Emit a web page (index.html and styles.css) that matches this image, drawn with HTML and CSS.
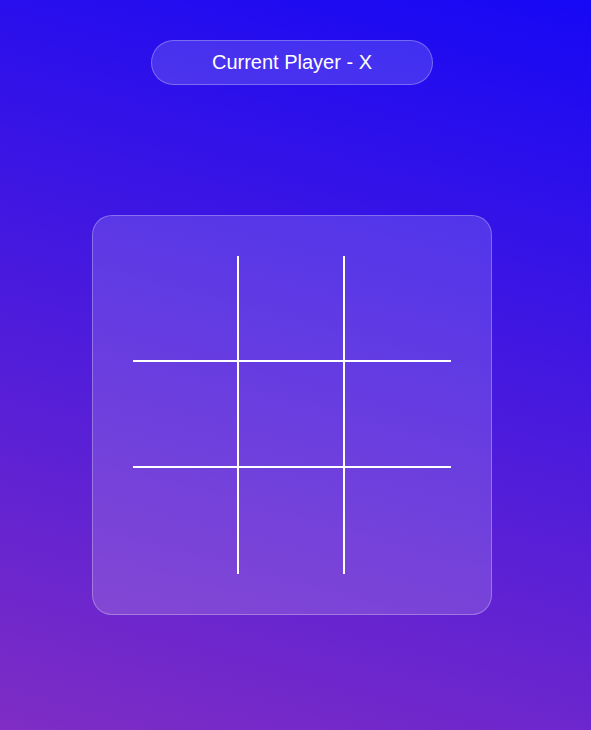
FILE: index.html
```html
<!DOCTYPE html>
<html lang="en">
<head>
<meta charset="utf-8">
<title>Tic Tac Toe</title>
<link rel="stylesheet" href="styles.css">
</head>
<body>
<main class="app">
  <div class="status">Current Player - X</div>
  <div class="board">
    <div class="grid">
      <div class="cell r c"></div>
      <div class="cell r c"></div>
      <div class="cell r"></div>
      <div class="cell r c"></div>
      <div class="cell r c"></div>
      <div class="cell r"></div>
      <div class="cell c"></div>
      <div class="cell c"></div>
      <div class="cell"></div>
    </div>
  </div>
</main>
</body>
</html>
```

FILE: styles.css
```css
html, body {
  margin: 0;
  height: 100%;
}
body {
  background: linear-gradient(15deg, #7f2dc4, #1608f5);
  font-family: "Liberation Sans", Arial, sans-serif;
  overflow: hidden;
}
.app {
  width: 584px;
  display: flex;
  flex-direction: column;
  align-items: center;
  padding-top: 40px;
}
.status {
  box-sizing: border-box;
  width: 282px;
  height: 45px;
  border-radius: 23px;
  background: rgba(255, 255, 255, 0.15);
  border: 1px solid rgba(255, 255, 255, 0.28);
  color: #fff;
  font-size: 20px;
  display: flex;
  align-items: center;
  justify-content: center;
}
.board {
  box-sizing: border-box;
  margin-top: 130px;
  width: 400px;
  height: 400px;
  border-radius: 20px;
  background: rgba(255, 255, 255, 0.15);
  border: 1px solid rgba(255, 255, 255, 0.28);
  display: flex;
  align-items: center;
  justify-content: center;
}
.grid {
  display: grid;
  grid-template-columns: 106px 106px 106px;
  grid-template-rows: 106px 106px 106px;
}
.cell {
  box-sizing: border-box;
}
.cell.c {
  border-right: 2px solid #fff;
}
.cell.r {
  border-bottom: 2px solid #fff;
}
```
